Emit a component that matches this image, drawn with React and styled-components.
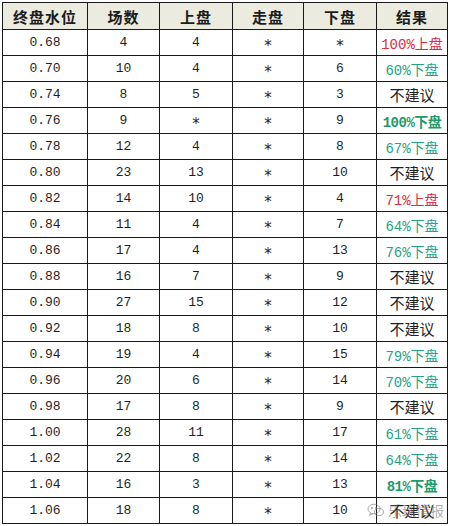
import React from "react";
import styled, { createGlobalStyle } from "styled-components";

const GlobalStyle = createGlobalStyle`
  body {
    margin: 0;
    background: #ffffff;
  }
`;

const Page = styled.div`
  position: relative;
  width: 450px;
  height: 526px;
  overflow: hidden;
  padding: 2px 0 0 2px;
  box-sizing: border-box;
  background: #ffffff;
`;

const Table = styled.table`
  border-collapse: collapse;
  table-layout: fixed;
  width: 446px;
  font-family: "Liberation Mono", "Noto Sans CJK SC", monospace;
`;

const HeadCell = styled.th`
  height: 26px;
  padding: 0;
  border: 1px solid #1a1a1a;
  background: #ebebdf;
  color: #1c1c1c;
  font-family: "Noto Sans CJK SC", sans-serif;
  font-size: 15px;
  font-weight: 700;
  text-align: center;
  letter-spacing: 1px;
`;

const Cell = styled.td`
  height: 25px;
  padding: 0;
  border: 1px solid #1a1a1a;
  color: #1f1f1f;
  font-size: 13px;
  text-align: center;
  white-space: nowrap;
`;

// 星号在原图里比等宽字体的 * 更大、居中
const Star = styled.span`
  display: inline-block;
  font-family: "DejaVu Sans", sans-serif;
  font-size: 15px;
  transform: translateY(3px);
`;

const colorOf = {
  red: "#dc2b3f",
  green: "#24a386",
  strong: "#1f9a6c",
  plain: "#1f1f1f",
};

const Result = styled.span`
  font-size: ${(p) => (p.$tone === "plain" ? "15px" : "14px")};
  font-family: ${(p) =>
    p.$tone === "plain"
      ? `"Noto Sans CJK SC", sans-serif`
      : `"Liberation Mono", "Noto Sans CJK SC", monospace`};
  font-weight: ${(p) => (p.$tone === "strong" ? 700 : 400)};
  color: ${(p) => colorOf[p.$tone]};
  letter-spacing: ${(p) => (p.$tone === "strong" ? "-0.5px" : "0")};
`;

const Watermark = styled.div`
  position: absolute;
  right: 6px;
  bottom: 6px;
  display: flex;
  align-items: center;
  gap: 3px;
  color: rgba(110, 110, 110, 0.55);
  font-family: "Noto Sans CJK SC", sans-serif;
  font-size: 14px;
  pointer-events: none;
`;

const cols = [85, 72, 73, 71, 73, 71];

const rows = [
  ["0.68", "4", "4", "*", "*", "100%上盘", "red"],
  ["0.70", "10", "4", "*", "6", "60%下盘", "green"],
  ["0.74", "8", "5", "*", "3", "不建议", "plain"],
  ["0.76", "9", "*", "*", "9", "100%下盘", "strong"],
  ["0.78", "12", "4", "*", "8", "67%下盘", "green"],
  ["0.80", "23", "13", "*", "10", "不建议", "plain"],
  ["0.82", "14", "10", "*", "4", "71%上盘", "red"],
  ["0.84", "11", "4", "*", "7", "64%下盘", "green"],
  ["0.86", "17", "4", "*", "13", "76%下盘", "green"],
  ["0.88", "16", "7", "*", "9", "不建议", "plain"],
  ["0.90", "27", "15", "*", "12", "不建议", "plain"],
  ["0.92", "18", "8", "*", "10", "不建议", "plain"],
  ["0.94", "19", "4", "*", "15", "79%下盘", "green"],
  ["0.96", "20", "6", "*", "14", "70%下盘", "green"],
  ["0.98", "17", "8", "*", "9", "不建议", "plain"],
  ["1.00", "28", "11", "*", "17", "61%下盘", "green"],
  ["1.02", "22", "8", "*", "14", "64%下盘", "green"],
  ["1.04", "16", "3", "*", "13", "81%下盘", "strong"],
  ["1.06", "18", "8", "*", "10", "不建议", "plain"],
];

// 微信公众号水印图标
const ChatIcon = () => (
  <svg width="18" height="15" viewBox="0 0 18 15" fill="none" stroke="rgba(120,120,120,0.6)" strokeWidth="1">
    <ellipse cx="7" cy="6" rx="6" ry="4.8" />
    <path d="M3.5 10 L2.5 12.5 L6 10.6" />
    <ellipse cx="12" cy="9" rx="4.5" ry="3.6" />
    <circle cx="5" cy="5" r="0.6" fill="rgba(120,120,120,0.6)" />
    <circle cx="9" cy="5" r="0.6" fill="rgba(120,120,120,0.6)" />
  </svg>
);

const Value = ({ v }) => (v === "*" ? <Star>*</Star> : v);

export default function App() {
  return (
    <Page>
      <GlobalStyle />
      <Table>
        <colgroup>
          {cols.map((w, i) => (
            <col key={i} style={{ width: w }} />
          ))}
        </colgroup>
        <thead>
          <tr>
            {["终盘水位", "场数", "上盘", "走盘", "下盘", "结果"].map((h) => (
              <HeadCell key={h}>{h}</HeadCell>
            ))}
          </tr>
        </thead>
        <tbody>
          {rows.map((r) => (
            <tr key={r[0]}>
              {r.slice(0, 5).map((v, i) => (
                <Cell key={i}>
                  <Value v={v} />
                </Cell>
              ))}
              <Cell>
                <Result $tone={r[6]}>{r[5]}</Result>
              </Cell>
            </tr>
          ))}
        </tbody>
      </Table>
      <Watermark>
        <ChatIcon />
        <span>乐球情报</span>
      </Watermark>
    </Page>
  );
}
